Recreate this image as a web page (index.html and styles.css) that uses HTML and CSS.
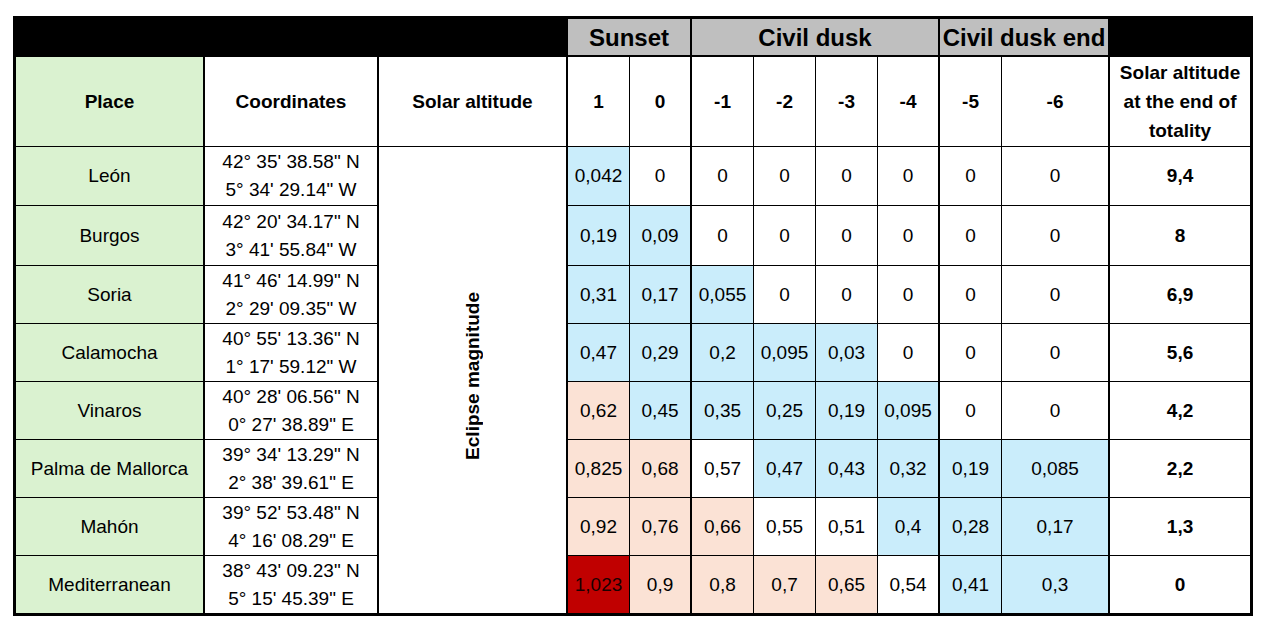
FILE: index.html
```html
<!DOCTYPE html>
<html>
<head>
<meta charset="utf-8">
<link rel="stylesheet" href="styles.css">
</head>
<body>
<table class="grid">
  <colgroup>
    <col class="w-place"><col class="w-coord"><col class="w-solar">
    <col class="w-n"><col class="w-n"><col class="w-n"><col class="w-n"><col class="w-n"><col class="w-n"><col class="w-n">
    <col class="w-six"><col class="w-end">
  </colgroup>
  <tr class="r-top">
    <td class="black" colspan="3"></td>
    <td class="grey tk" colspan="2">Sunset</td>
    <td class="grey tk" colspan="4">Civil dusk</td>
    <td class="grey tk" colspan="2">Civil dusk end</td>
    <td class="black last"></td>
  </tr>
  <tr class="r-head">
    <td class="head green tk">Place</td>
    <td class="head tk">Coordinates</td>
    <td class="head tk">Solar altitude</td>
    <td class="head">1</td>
    <td class="head tk">0</td>
    <td class="head">-1</td>
    <td class="head">-2</td>
    <td class="head">-3</td>
    <td class="head tk">-4</td>
    <td class="head">-5</td>
    <td class="head tk">-6</td>
    <td class="head last endhead">Solar altitude at the end of totality</td>
  </tr>
  <tr class="r1">
    <td class="place green tk">León</td>
    <td class="coord tk">42° 35' 38.58" N<br>5° 34' 29.14" W</td>
    <td class="vert tk lastrow" rowspan="8"><span class="vtext">Eclipse magnitude</span></td>
    <td class="num blue">0,042</td><td class="num tk">0</td><td class="num">0</td><td class="num">0</td><td class="num">0</td><td class="num tk">0</td><td class="num">0</td><td class="num tk">0</td>
    <td class="tot last">9,4</td>
  </tr>
  <tr class="r2">
    <td class="place green tk">Burgos</td>
    <td class="coord tk">42° 20' 34.17" N<br>3° 41' 55.84" W</td>
    <td class="num blue">0,19</td><td class="num blue tk">0,09</td><td class="num">0</td><td class="num">0</td><td class="num">0</td><td class="num tk">0</td><td class="num">0</td><td class="num tk">0</td>
    <td class="tot last">8</td>
  </tr>
  <tr class="r3">
    <td class="place green tk">Soria</td>
    <td class="coord tk">41° 46' 14.99" N<br>2° 29' 09.35" W</td>
    <td class="num blue">0,31</td><td class="num blue tk">0,17</td><td class="num blue">0,055</td><td class="num">0</td><td class="num">0</td><td class="num tk">0</td><td class="num">0</td><td class="num tk">0</td>
    <td class="tot last">6,9</td>
  </tr>
  <tr class="r4">
    <td class="place green tk">Calamocha</td>
    <td class="coord tk">40° 55' 13.36" N<br>1° 17' 59.12" W</td>
    <td class="num blue">0,47</td><td class="num blue tk">0,29</td><td class="num blue">0,2</td><td class="num blue">0,095</td><td class="num blue">0,03</td><td class="num tk">0</td><td class="num">0</td><td class="num tk">0</td>
    <td class="tot last">5,6</td>
  </tr>
  <tr class="r5">
    <td class="place green tk">Vinaros</td>
    <td class="coord tk">40° 28' 06.56" N<br>0° 27' 38.89" E</td>
    <td class="num peach">0,62</td><td class="num blue tk">0,45</td><td class="num blue">0,35</td><td class="num blue">0,25</td><td class="num blue">0,19</td><td class="num blue tk">0,095</td><td class="num">0</td><td class="num tk">0</td>
    <td class="tot last">4,2</td>
  </tr>
  <tr class="r6">
    <td class="place green tk">Palma de Mallorca</td>
    <td class="coord tk">39° 34' 13.29" N<br>2° 38' 39.61" E</td>
    <td class="num peach">0,825</td><td class="num peach tk">0,68</td><td class="num">0,57</td><td class="num blue">0,47</td><td class="num blue">0,43</td><td class="num blue tk">0,32</td><td class="num blue">0,19</td><td class="num blue tk">0,085</td>
    <td class="tot last">2,2</td>
  </tr>
  <tr class="r7">
    <td class="place green tk">Mahón</td>
    <td class="coord tk">39° 52' 53.48" N<br>4° 16' 08.29" E</td>
    <td class="num peach">0,92</td><td class="num peach tk">0,76</td><td class="num peach">0,66</td><td class="num">0,55</td><td class="num">0,51</td><td class="num blue tk">0,4</td><td class="num blue">0,28</td><td class="num blue tk">0,17</td>
    <td class="tot last">1,3</td>
  </tr>
  <tr class="r8">
    <td class="place green tk lastrow">Mediterranean</td>
    <td class="coord tk lastrow">38° 43' 09.23" N<br>5° 15' 45.39" E</td>
    <td class="num red lastrow">1,023</td><td class="num peach tk lastrow">0,9</td><td class="num peach lastrow">0,8</td><td class="num peach lastrow">0,7</td><td class="num peach lastrow">0,65</td><td class="num tk lastrow">0,54</td><td class="num blue lastrow">0,41</td><td class="num blue tk lastrow">0,3</td>
    <td class="tot last lastrow">0</td>
  </tr>
</table>
</body>
</html>
```

FILE: styles.css
```css
html, body {
  margin: 0;
  padding: 0;
  background: #ffffff;
}

body {
  padding: 16px 0 0 13px;
  font-family: "Liberation Sans", Arial, sans-serif;
  color: #000000;
}

.grid {
  border-collapse: separate;
  border-spacing: 0;
  table-layout: fixed;
  width: 1240px;
  border: 3px solid #000000;
}

.w-place { width: 189px; }
.w-coord { width: 174px; }
.w-solar { width: 189px; }
.w-n { width: 62px; }
.w-six { width: 108px; }
.w-end { width: 140px; }

.grid td {
  padding: 0;
  text-align: center;
  vertical-align: middle;
  border-right: 1px solid #000000;
  border-bottom: 1px solid #000000;
  font-size: 19px;
  line-height: 28px;
  background: #ffffff;
  overflow: hidden;
  white-space: nowrap;
}

.grid td.head { line-height: 29px; }

.grid td.tk { border-right-width: 2px; }
.grid td.last { border-right: 0; }
.grid td.lastrow { border-bottom: 0; }

.r-top { height: 38px; }
.r-head { height: 90px; }
.r1 { height: 59px; }
.r2 { height: 60px; }
.r3, .r4, .r5, .r6, .r7 { height: 58px; }
.r8 { height: 57px; }

.grid .r-top td {
  border-bottom-width: 2px;
  font-size: 24px;
  font-weight: bold;
  line-height: 28px;
  padding-top: 2px;
}

.grid td.black { background: #000000; }
.grid td.grey { background: #bfbfbf; }

.grid td.head { font-weight: bold; }
.grid td.endhead {
  white-space: normal;
  padding: 0 4px;
}

.grid td.green { background: #daf2d0; }
.grid td.blue { background: #caedfb; }
.grid td.peach { background: #fbe2d5; }
.grid td.red { background: #c00000; color: #1a0000; }

.grid td.tot { font-weight: bold; }

.grid td.vert { padding: 0; }
.vtext {
  display: inline-block;
  writing-mode: vertical-rl;
  transform: rotate(180deg);
  font-weight: bold;
  font-size: 19px;
  line-height: 20px;
}
```
